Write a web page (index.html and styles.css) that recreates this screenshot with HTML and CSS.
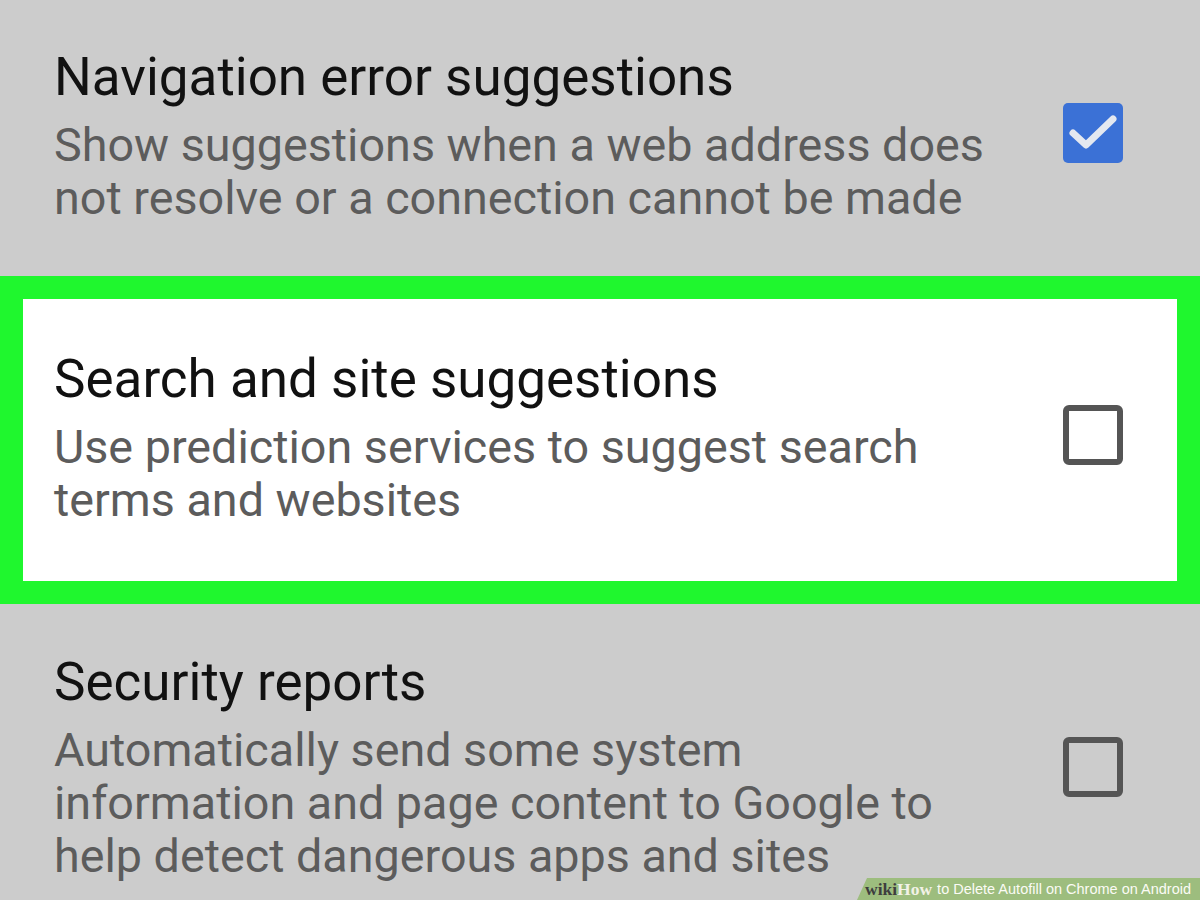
FILE: index.html
```html
<!DOCTYPE html>
<html lang="en">
<head>
<meta charset="utf-8">
<title>Chrome privacy settings</title>
<link rel="stylesheet" href="styles.css">
</head>
<body>
<main class="screen">
  <section class="row row-first">
    <div class="text">
      <div class="title">Navigation error suggestions</div>
      <div class="desc">Show suggestions when a web address does<br>not resolve or a connection cannot be made</div>
    </div>
    <div class="check checked">
      <svg viewBox="0 0 60 60" width="60" height="60"><path d="M10 30 L23 42 L50 16" fill="none" stroke="#e4e8f0" stroke-width="7" stroke-linecap="round" stroke-linejoin="round"/></svg>
    </div>
  </section>
  <section class="row row-highlight">
    <div class="text">
      <div class="title">Search and site suggestions</div>
      <div class="desc">Use prediction services to suggest search<br>terms and websites</div>
    </div>
    <div class="check"></div>
  </section>
  <section class="row row-last">
    <div class="text">
      <div class="title">Security reports</div>
      <div class="desc">Automatically send some system<br>information and page content to Google to<br>help detect dangerous apps and sites</div>
    </div>
    <div class="check"></div>
  </section>
  <div class="watermark"><span class="wm-wiki">wiki</span><span class="wm-how">How</span><span class="wm-rest">to Delete Autofill on Chrome on Android</span></div>
</main>
</body>
</html>
```
FILE: styles.css
```css
html, body {
  margin: 0;
  padding: 0;
  height: 900px;
  overflow: hidden;
}
body {
  background: #cccccc;
  font-family: Roboto, "Noto Sans", sans-serif;
}
.screen {
  position: relative;
  width: 1200px;
  height: 900px;
  display: flex;
  flex-direction: column;
}
.row {
  display: flex;
  align-items: flex-start;
  box-sizing: border-box;
  padding: 0 77px 0 54px;
}
.row-first {
  height: 276px;
  padding-top: 47px;
}
.row-highlight {
  height: 328px;
  background: #ffffff;
  border: 23px solid #1ff72e;
  padding: 50px 54px 0 31px;
}
.row-last {
  flex: 1;
  padding-top: 48px;
}
.text {
  flex: 1;
  display: flex;
  flex-direction: column;
}
.title {
  font-size: 53px;
  line-height: 60px;
  color: #111111;
  margin-bottom: 12px;
  white-space: nowrap;
}
.desc {
  font-size: 46.7px;
  line-height: 53px;
  color: #5c5c5c;
  white-space: nowrap;
}
.check {
  width: 60px;
  height: 60px;
  box-sizing: border-box;
  border: 6px solid #555555;
  border-radius: 6px;
  flex: none;
}
.row-first .check { margin-top: 56px; }
.row-highlight .check { margin-top: 56px; }
.row-last .check { margin-top: 85px; }
.check.checked {
  border: none;
  background: #3b71d6;
  border-radius: 5px;
}
.check svg { display: block; }
.watermark {
  position: absolute;
  right: 0;
  bottom: 0;
  height: 22px;
  width: 343px;
  background: #9dbd7e;
  clip-path: polygon(10px 0, 100% 0, 100% 100%, 0 100%);
  box-sizing: border-box;
  padding-left: 8px;
  display: flex;
  align-items: center;
  white-space: nowrap;
}
.wm-wiki {
  font-family: "Liberation Serif", serif;
  font-weight: bold;
  font-size: 17.5px;
  color: #3e3e3e;
}
.wm-how {
  font-family: "Liberation Serif", serif;
  font-weight: bold;
  font-size: 17.5px;
  color: #f2f2e6;
}
.wm-rest {
  font-family: "Liberation Sans", sans-serif;
  font-size: 14.5px;
  color: #fbfbf5;
  margin-left: 5px;
}
```
